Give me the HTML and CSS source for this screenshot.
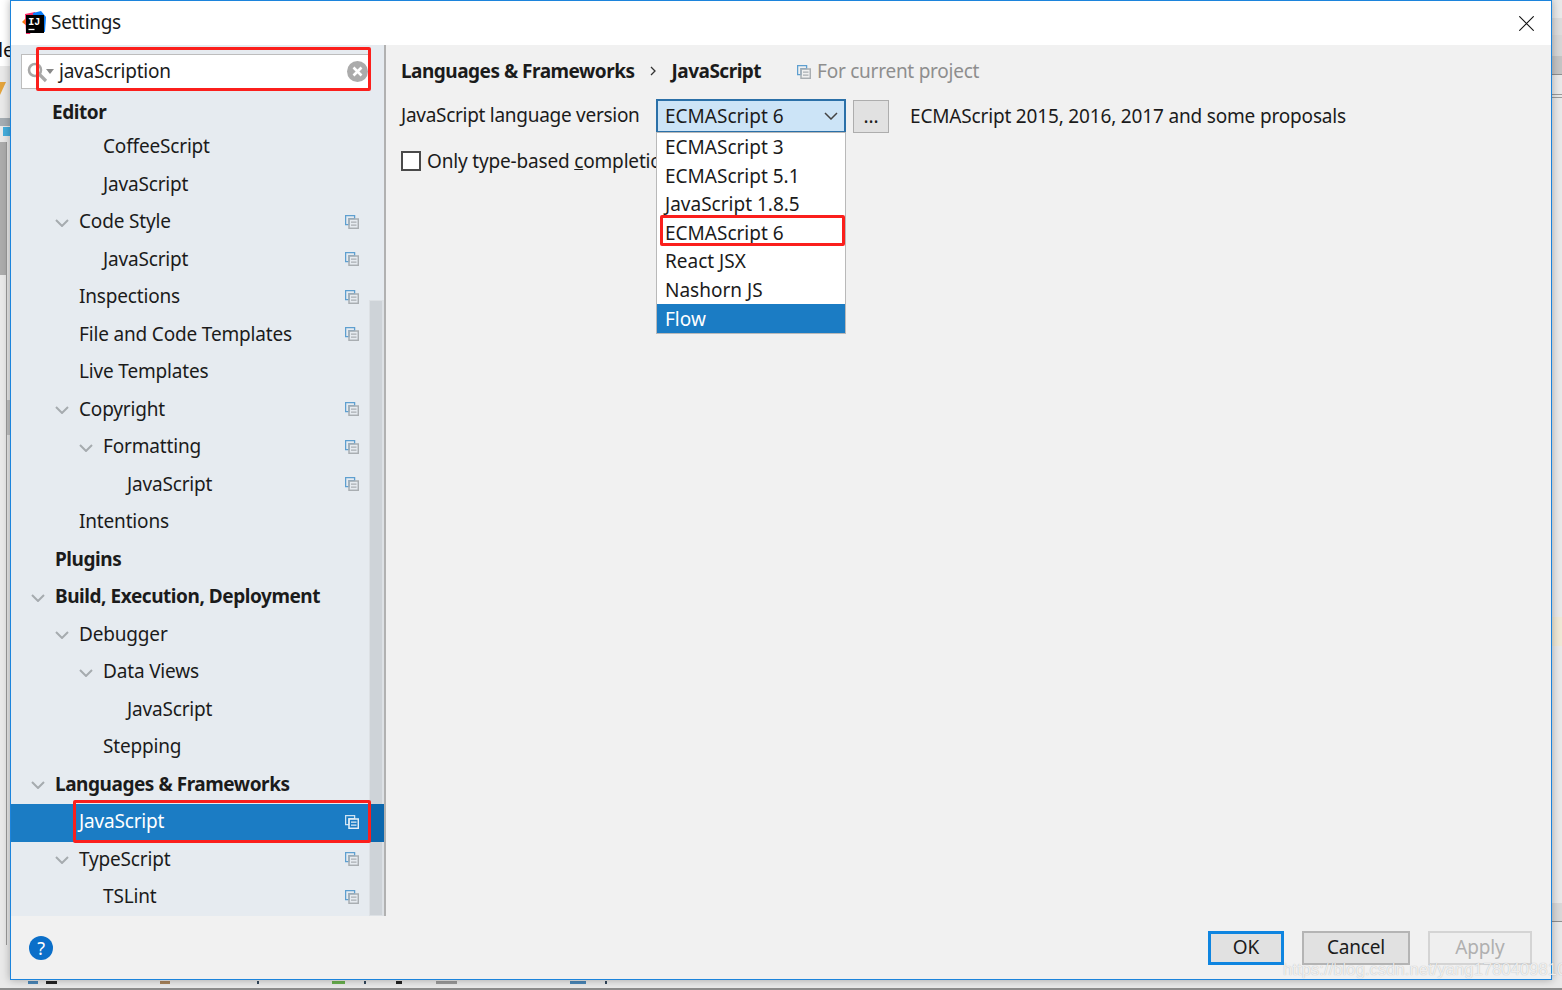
FILE: index.html
```html
<!DOCTYPE html>
<html lang="en">
<head>
<meta charset="utf-8">
<title>Settings</title>
<link rel="stylesheet" href="styles.css">
</head>
<body>
<svg width="0" height="0" class="defs">
  <symbol id="copy" viewBox="0 0 14 14">
    <path d="M.6.6h9v3H4v6H.6z" fill="none" stroke="#5e9fd0" stroke-width="1.3"/>
    <rect x="4" y="4" width="9.3" height="9.3" fill="none" stroke="#a9aeb2" stroke-width="1.5"/>
    <path d="M6 7.200h5.500M6 10.200h5.500" stroke="#a9aeb2" stroke-width="1.300"/>
  </symbol>
  <symbol id="copy-sel" viewBox="0 0 14 14">
    <path d="M.6.6h9v3H4v6H.6z" fill="none" stroke="#cfe3f2" stroke-width="1.3"/>
    <rect x="4" y="4" width="9.3" height="9.3" fill="none" stroke="#e4eef6" stroke-width="1.5"/>
    <path d="M6 7.200h5.500M6 10.200h5.500" stroke="#e4eef6" stroke-width="1.300"/>
  </symbol>
  <symbol id="chev" viewBox="0 0 14 8">
    <path d="M1 1l6 6 6-6" fill="none" stroke="#a6abaf" stroke-width="2"/>
  </symbol>
</svg>
<div class="desktop">
  <div class="behind">
    <div class="bg bg-left-top"><span class="bg-text">le</span></div>
    <div class="bg bg-orange"></div>
    <div class="bg bg-toolbar"></div>
    <div class="bg bg-blue"></div>
    <div class="bg bg-panel"></div>
    <div class="bg bg-line"></div>
    <div class="bg bg-shade"></div>
    <div class="bg bg-r1"></div>
    <div class="bg bg-r2"></div>
    <div class="bg bg-r3"></div>
    <div class="bg bg-r4"></div>
    <div class="bg bg-r5"></div>
    <div class="bg bg-cream"></div>
    <div class="bg bg-r6"></div>
    <div class="bg bg-bottom"></div>
    <div class="bg bg-tick t1"></div>
    <div class="bg bg-tick t2"></div>
    <div class="bg bg-tick t3"></div>
    <div class="bg bg-tick t4"></div>
    <div class="bg bg-tick t5"></div>
    <div class="bg bg-tick t6"></div>
    <div class="bg bg-tick t7"></div>
    <div class="bg bg-tick t8"></div>
    <div class="bg bg-tick t9"></div>
    <div class="bg bg-tick t10"></div>
  </div>
  <div class="dialog">
    <header class="titlebar">
      <svg class="logo" width="24" height="24" viewBox="0 0 24 24">
        <path d="M0 11l6-6 5 3-5 8z" fill="#f97a12"/>
        <path d="M3 3l10-2 3 4-8 18-4 0z" fill="#fc2e6c"/>
        <path d="M11 2l8-2 5 6-1 15-10-2z" fill="#087cfa"/>
        <rect x="4" y="4" width="18" height="18"/>
        <text x="6.200" y="14" class="logo-text">IJ</text>
        <path d="M6.500 18.500h6" stroke="#fff" stroke-width="1.300"/>
      </svg>
      <span class="title">Settings</span>
      <svg class="close" width="15" height="15" viewBox="0 0 15 15"><path d="M.3.300l14.400 14.400M14.700.300L.3 14.700" stroke="#111" stroke-width="1.100"/></svg>
    </header>
    <div class="main">
      <aside class="sidebar">
        <div class="search">
          <svg class="magnifier" width="22" height="22" viewBox="0 0 22 22">
            <circle cx="8" cy="8" r="6" fill="none" stroke="#a8a8a8" stroke-width="2.600"/>
            <path d="M12.500 12.500l6.500 6.500" stroke="#a8a8a8" stroke-width="3.200"/>
          </svg>
          <span class="caret-down"></span>
          <span class="query">javaScription</span>
          <svg class="clear" width="21" height="21" viewBox="0 0 21 21">
            <circle cx="10.500" cy="10.500" r="10.500" fill="#ababab"/>
            <path d="M6.500 6.500l8 8M14.500 6.500l-8 8" stroke="#fff" stroke-width="2.600"/>
          </svg>
        </div>
        <div class="tree">
          <div class="row row-first d0 bold"><span class="label">Editor</span></div>
          <div class="row d2"><span class="label">CoffeeScript</span></div>
          <div class="row d2"><span class="label">JavaScript</span></div>
          <div class="row d1 open"><svg class="chev"><use href="#chev"/></svg><span class="label">Code Style</span><svg class="copy"><use href="#copy"/></svg></div>
          <div class="row d2"><span class="label">JavaScript</span><svg class="copy"><use href="#copy"/></svg></div>
          <div class="row d1"><span class="label">Inspections</span><svg class="copy"><use href="#copy"/></svg></div>
          <div class="row d1"><span class="label">File and Code Templates</span><svg class="copy"><use href="#copy"/></svg></div>
          <div class="row d1"><span class="label">Live Templates</span></div>
          <div class="row d1 open"><svg class="chev"><use href="#chev"/></svg><span class="label">Copyright</span><svg class="copy"><use href="#copy"/></svg></div>
          <div class="row d2 open"><svg class="chev"><use href="#chev"/></svg><span class="label">Formatting</span><svg class="copy"><use href="#copy"/></svg></div>
          <div class="row d3"><span class="label">JavaScript</span><svg class="copy"><use href="#copy"/></svg></div>
          <div class="row d1"><span class="label">Intentions</span></div>
          <div class="row d0 bold"><span class="label">Plugins</span></div>
          <div class="row d0 bold open"><svg class="chev"><use href="#chev"/></svg><span class="label">Build, Execution, Deployment</span></div>
          <div class="row d1 open"><svg class="chev"><use href="#chev"/></svg><span class="label">Debugger</span></div>
          <div class="row d2 open"><svg class="chev"><use href="#chev"/></svg><span class="label">Data Views</span></div>
          <div class="row d3"><span class="label">JavaScript</span></div>
          <div class="row d2"><span class="label">Stepping</span></div>
          <div class="row d0 bold open"><svg class="chev"><use href="#chev"/></svg><span class="label">Languages &amp; Frameworks</span></div>
          <div class="row d1 selected"><span class="label">JavaScript</span><svg class="copy"><use href="#copy-sel"/></svg></div>
          <div class="row d1 open"><svg class="chev"><use href="#chev"/></svg><span class="label">TypeScript</span><svg class="copy"><use href="#copy"/></svg></div>
          <div class="row d2"><span class="label">TSLint</span><svg class="copy"><use href="#copy"/></svg></div>
        </div>
        <div class="scrollbar"></div>
        <div class="mark mark-search"></div>
        <div class="mark mark-js"></div>
      </aside>
      <section class="content">
        <div class="crumbs">
          <span class="crumb">Languages &amp; Frameworks</span>
          <svg class="crumb-sep" width="6" height="10" viewBox="0 0 6 10"><path d="M1 1l4 4-4 4" fill="none" stroke="#333" stroke-width="1.300"/></svg>
          <span class="crumb">JavaScript</span>
          <svg class="copy crumb-copy"><use href="#copy"/></svg>
          <span class="scope">For current project</span>
        </div>
        <div class="version-row">
          <span class="version-label">JavaScript language version</span>
          <div class="combo">
            <span>ECMAScript 6</span>
            <svg width="14" height="8" viewBox="0 0 14 8"><path d="M1 1l6 6 6-6" fill="none" stroke="#444" stroke-width="1.500"/></svg>
            <ul class="popup">
              <li>ECMAScript 3</li>
              <li>ECMAScript 5.1</li>
              <li>JavaScript 1.8.5</li>
              <li class="marked">ECMAScript 6</li>
              <li>React JSX</li>
              <li>Nashorn JS</li>
              <li class="active">Flow</li>
            </ul>
          </div>
          <div class="dots">...</div>
          <span class="version-desc">ECMAScript 2015, 2016, 2017 and some proposals</span>
        </div>
        <div class="check-row">
          <span class="checkbox"></span>
          <span class="check-label">Only type-based <u>c</u>ompletion</span>
        </div>
      </section>
    </div>
    <footer class="footer">
      <div class="help">?</div>
      <div class="buttons">
        <div class="btn btn-default">OK</div>
        <div class="btn btn-cancel">Cancel</div>
        <div class="btn btn-disabled">Apply</div>
      </div>
    </footer>
  </div>
  <div class="watermark">https://blog.csdn.net/yang1780409810</div>
</div>
</body>
</html>
```
FILE: styles.css
```css
* { box-sizing: border-box; }
html, body { margin: 0; padding: 0; }
body { width: 1562px; height: 990px; overflow: hidden; font-family: "Noto Sans", "Liberation Sans", sans-serif; font-size: 19px; letter-spacing: -0.17px; color: #1b1b1b; }
.defs { position: absolute; }
.desktop { position: relative; width: 1562px; height: 990px; background: #e9e9e9; padding-left: 10px; }
.behind { position: absolute; inset: 0; overflow: hidden; }
.bg { position: absolute; }
.bg-left-top { left: 0; top: 0; width: 10px; height: 66px; background: #fff; overflow: hidden; }
.bg-text { position: absolute; left: -2px; top: 36px; font-size: 20px; color: #111; }
.bg-orange { left: 0; top: 82px; width: 0; height: 0; border-left: 6px solid #e3a33b; border-bottom: 13px solid transparent; }
.bg-toolbar { left: 0; top: 118px; width: 10px; height: 8px; background: #a5adb3; }
.bg-blue { left: 3px; top: 127px; width: 7px; height: 9px; background: #45aede; }
.bg-panel { left: 0; top: 142px; width: 6px; height: 133px; background: #ababab; }
.bg-line { left: 6px; top: 142px; width: 1px; height: 803px; background: #9a9a9a; }
.bg-shade { left: 7px; top: 400px; width: 3px; height: 35px; background: #c4c4c4; }
.bg-r1 { left: 1552px; top: 18px; width: 10px; height: 17px; background: #dcdcdc; }
.bg-r2 { left: 1552px; top: 35px; width: 10px; height: 21px; background: #d6d6d6; }
.bg-r3 { left: 1552px; top: 56px; width: 10px; height: 19px; background: #c4c4c4; border-bottom: 1px solid #8f8f8f; }
.bg-r4 { left: 1552px; top: 94px; width: 10px; height: 1px; background: #9a9a9a; }
.bg-r5 { left: 1552px; top: 97px; width: 10px; height: 1px; background: #9a9a9a; }
.bg-cream { left: 1552px; top: 617px; width: 10px; height: 29px; background: #efe9d6; }
.bg-r6 { left: 1552px; top: 903px; width: 10px; height: 19px; background: #d8d8d8; border-bottom: 1px solid #8f8f8f; }
.bg-bottom { left: 0; top: 988px; width: 1562px; height: 2px; background: #8c8c8c; }
.bg-tick { top: 981px; height: 3px; width: 2px; background: #33475c; }
.t1 { left: 28px; width: 10px; background: #4a86b8; }
.t2 { left: 46px; width: 11px; background: #222; }
.t3 { left: 160px; width: 10px; background: #a8835a; }
.t4 { left: 257px; }
.t5 { left: 332px; width: 13px; background: #69b04e; }
.t6 { left: 364px; }
.t7 { left: 396px; width: 6px; background: #222; }
.t8 { left: 436px; width: 21px; background: #9a9a9a; }
.t9 { left: 570px; width: 16px; background: #4a86b8; }
.t10 { left: 605px; }
.dialog { position: relative; width: 1542px; height: 980px; border: 1px solid #1c84dc; background: #f1f1f1; display: flex; flex-direction: column; box-shadow: 0 0 8px rgba(0,0,0,.3); }
.titlebar { height: 44px; background: #fff; display: flex; align-items: center; padding: 0 17px 0 11px; flex: none; }
.logo { margin-right: 5px; }
.logo-text { font-family: "Liberation Mono", monospace; font-size: 10px; font-weight: 700; letter-spacing: 0; fill: #fff; }
.title { margin-bottom: 2px; letter-spacing: -0.3px; }
.close { margin-left: auto; }
.main { flex: 1; display: flex; min-height: 0; }
.sidebar { position: relative; width: 375px; flex: none; background: #e6ebf0; border-right: 2px solid #b1b1b1; }
.search { display: flex; align-items: center; height: 35px; margin: 9px 14px 0 10px; background: #fff; border: 1px solid #bdbdbd; padding: 0 1px 0 5px; }
.magnifier { flex: none; margin-top: 2px; }
.caret-down { width: 0; height: 0; border: 4px solid transparent; border-top: 5px solid #888; border-bottom: 0; margin: 0 5px 0 -3px; }
.query { flex: 1; letter-spacing: -0.24px; margin-bottom: 1px; }
.tree { padding-top: 4.500px; }
.row { display: flex; align-items: center; height: 37.5px; padding-right: 25px; white-space: nowrap; }
.row .label { margin-bottom: 3px; }
.row-first { height: 37px; margin-bottom: -1.500px; }
.row-first .label { margin-left: -3px; margin-bottom: 0; }
.d0 { padding-left: 44px; }
.d1 { padding-left: 68px; }
.d2 { padding-left: 92px; }
.d3 { padding-left: 116px; }
.bold .label { font-weight: 700; letter-spacing: -0.45px; }
.chev { width: 14px; height: 8px; margin-left: -24px; margin-right: 10px; flex: none; }
.copy { width: 14px; height: 14px; flex: none; margin-left: auto; margin-bottom: 2px; }
.selected { background: #1b7cc4; color: #fff; position: relative; z-index: 1; }
.selected::after { content: ""; position: absolute; top: 0; bottom: 0; right: 0; width: 15px; background: #0c67ad; }
.scrollbar { position: absolute; right: 0; top: 255px; bottom: 0; width: 15px; background: #ced3d8; border: 1px solid #dde1e5; border-right-width: 2px; }
.mark { position: absolute; border: 3px solid #fb1f1c; border-radius: 2px; z-index: 2; }
.mark-search { left: 25px; top: 2px; width: 335px; height: 44px; }
.mark-js { left: 62px; top: 755px; width: 298px; height: 43px; }
.content { flex: 1; padding: 14px 15px 0 15px; min-width: 0; }
.crumbs { display: flex; align-items: center; height: 24px; }
.crumb { font-weight: 700; letter-spacing: -0.5px; }
.crumb-sep { margin: 0 15px 0 16px; }
.crumb-copy { margin-left: 36px; margin-right: 6px; margin-top: 1px; margin-bottom: 0; }
.scope { color: #8e8e8e; letter-spacing: -0.25px; }
.version-row { display: flex; align-items: center; height: 34px; margin-top: 16px; }
.version-label { width: 255px; flex: none; white-space: nowrap; letter-spacing: -0.28px; margin-bottom: 2px; }
.combo { position: relative; width: 190px; height: 34px; flex: none; background: #cce4f7; border: 2px solid #2b70a8; display: flex; align-items: center; justify-content: space-between; padding: 0 6px 0 7px; letter-spacing: 0; }
.popup { position: absolute; left: -2px; top: 31px; width: 190px; margin: 0; padding: 0; list-style: none; background: #fff; border: 1px solid #b9b9b9; z-index: 3; }
.popup li { height: 28.500px; line-height: 29px; padding-left: 8px; }
.popup .active { background: #1b7cc4; color: #fff; line-height: 30px; }
.popup .marked { position: relative; }
.popup .marked::after { content: ""; position: absolute; left: 3px; right: 0; top: -4px; bottom: 1px; border: 3px solid #fb1f1c; border-radius: 2px; }
.dots { width: 36px; height: 33px; margin-left: 7px; background: #e1e1e1; border: 1px solid #adadad; text-align: center; line-height: 30px; flex: none; }
.version-desc { margin-left: 21px; white-space: nowrap; margin-bottom: 1px; }
.check-row { display: flex; align-items: center; margin-top: 16px; height: 24px; white-space: nowrap; }
.checkbox { width: 20px; height: 20px; background: #fff; border: 2px solid #4a4a4a; margin-right: 6px; flex: none; }
.footer { height: 63px; flex: none; display: flex; align-items: center; justify-content: space-between; padding: 1px 19px 0 18px; }
.help { width: 24px; height: 24px; border-radius: 50%; background: #0b6fc9; color: #fff; text-align: center; line-height: 24px; font-size: 18px; }
.buttons { display: flex; gap: 18px; }
.btn { width: 104px; height: 34px; background: #e1e1e1; border: 1px solid #adadad; text-align: center; line-height: 31px; }
.btn-default { width: 76px; border: 3px solid #0f85e0; line-height: 27px; }
.btn-cancel { width: 108px; border-width: 2px; border-color: #b4b4b4; line-height: 29px; }
.btn-disabled { border: 2px solid #d4d4d4; color: #b0b0b0; background: #efefef; line-height: 29px; }
.watermark { position: absolute; left: 1283px; top: 960px; font-family: "Liberation Sans", sans-serif; font-size: 16.500px; letter-spacing: .1px; color: rgba(255,255,255,.8); text-shadow: 0 0 1px rgba(0,0,0,.3); white-space: nowrap; }
```
